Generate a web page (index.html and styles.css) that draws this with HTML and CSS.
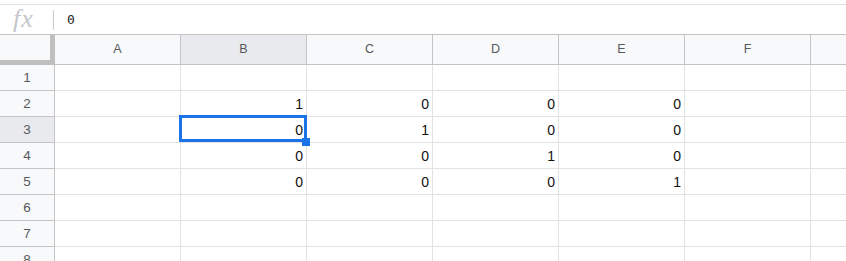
FILE: index.html
```html
<!DOCTYPE html>
<html>
<head>
<meta charset="utf-8">
<link rel="stylesheet" href="styles.css">
</head>
<body>
<div class="topbar"></div>
<div class="formula">
  <div class="fxbox"><span class="fx">fx</span></div>
  <span class="sep"></span>
  <span class="val">0</span>
</div>
<div class="sheet">
  <div class="row head">
    <div class="cell corner"></div>
    <div class="cell ch">A</div>
    <div class="cell ch active">B</div>
    <div class="cell ch">C</div>
    <div class="cell ch">D</div>
    <div class="cell ch">E</div>
    <div class="cell ch">F</div>
    <div class="cell ch"></div>
  </div>
  <div class="row">
    <div class="cell rh">1</div>
    <div class="cell"></div><div class="cell"></div><div class="cell"></div><div class="cell"></div><div class="cell"></div><div class="cell"></div><div class="cell"></div>
  </div>
  <div class="row">
    <div class="cell rh">2</div>
    <div class="cell"></div><div class="cell num">1</div><div class="cell num">0</div><div class="cell num">0</div><div class="cell num">0</div><div class="cell"></div><div class="cell"></div>
  </div>
  <div class="row">
    <div class="cell rh active">3</div>
    <div class="cell"></div><div class="cell num">0</div><div class="cell num">1</div><div class="cell num">0</div><div class="cell num">0</div><div class="cell"></div><div class="cell"></div>
  </div>
  <div class="row">
    <div class="cell rh">4</div>
    <div class="cell"></div><div class="cell num">0</div><div class="cell num">0</div><div class="cell num">1</div><div class="cell num">0</div><div class="cell"></div><div class="cell"></div>
  </div>
  <div class="row">
    <div class="cell rh">5</div>
    <div class="cell"></div><div class="cell num">0</div><div class="cell num">0</div><div class="cell num">0</div><div class="cell num">1</div><div class="cell"></div><div class="cell"></div>
  </div>
  <div class="row">
    <div class="cell rh">6</div>
    <div class="cell"></div><div class="cell"></div><div class="cell"></div><div class="cell"></div><div class="cell"></div><div class="cell"></div><div class="cell"></div>
  </div>
  <div class="row">
    <div class="cell rh">7</div>
    <div class="cell"></div><div class="cell"></div><div class="cell"></div><div class="cell"></div><div class="cell"></div><div class="cell"></div><div class="cell"></div>
  </div>
  <div class="row">
    <div class="cell rh">8</div>
    <div class="cell"></div><div class="cell"></div><div class="cell"></div><div class="cell"></div><div class="cell"></div><div class="cell"></div><div class="cell"></div>
  </div>
  <div class="sel"><span class="handle"></span></div>
</div>
</body>
</html>
```
FILE: styles.css
```css
html, body {
  margin: 0;
  padding: 0;
  background: #fff;
  overflow: hidden;
}
body {
  width: 846px;
  height: 261px;
  font-family: "Liberation Sans", Arial, sans-serif;
}
.topbar {
  height: 4px;
  border-bottom: 1px solid #e0e0e0;
}
.formula {
  height: 29px;
  display: flex;
  align-items: center;
}
.fxbox {
  width: 53px;
  padding-left: 13px;
  box-sizing: border-box;
}
.fx {
  font-family: "Liberation Serif", serif;
  font-style: italic;
  font-size: 26px;
  letter-spacing: 1px;
  color: #c4c7cb;
  line-height: 24px;
  position: relative;
  top: -1px;
}
.sep {
  width: 1px;
  height: 20px;
  background: #c8c9cb;
}
.val {
  margin-left: 13px;
  font-family: "DejaVu Sans Mono", monospace;
  font-size: 13px;
  color: #222;
}
.sheet {
  position: relative;
  border-top: 1px solid #c4c4c4;
}
.row {
  display: grid;
  grid-template-columns: 55px repeat(6, 126px) 35px;
}
.cell {
  box-sizing: border-box;
  height: 26px;
  border-right: 1px solid #e2e2e3;
  border-bottom: 1px solid #e2e2e3;
}
.row .cell:last-child {
  border-right: none;
}
.head .cell {
  height: 30px;
  background: #f8f9fa;
  border-right-color: #c4c4c4;
  border-bottom-color: #c4c4c4;
}
.ch {
  text-align: center;
  line-height: 29px;
  font-size: 12.5px;
  color: #55585d;
}
.head .corner {
  border-right: 5px solid #bfbfbf;
  border-bottom: 5px solid #bfbfbf;
}
.rh {
  background: #f8f9fa;
  border-right-color: #c4c4c4;
  border-bottom-color: #c4c4c4;
  text-align: center;
  font-size: 13.5px;
  line-height: 26px;
  color: #55585d;
}
.head .active, .rh.active {
  background: #e8eaed;
}
.num {
  text-align: right;
  padding-right: 3px;
  font-size: 14px;
  line-height: 26px;
  color: #111;
}
.sel {
  position: absolute;
  left: 179px;
  top: 80px;
  width: 128px;
  height: 27px;
  box-sizing: border-box;
  border: 3px solid #1a73e8;
}
.handle {
  position: absolute;
  right: -6px;
  bottom: -7px;
  width: 8px;
  height: 8px;
  background: #1a73e8;
}
```
